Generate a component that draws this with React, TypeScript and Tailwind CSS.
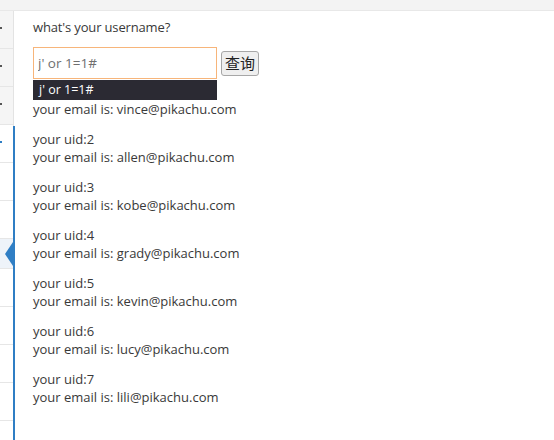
const users = [
    { uid: 2, email: 'allen@pikachu.com' },
    { uid: 3, email: 'kobe@pikachu.com' },
    { uid: 4, email: 'grady@pikachu.com' },
    { uid: 5, email: 'kevin@pikachu.com' },
    { uid: 6, email: 'lucy@pikachu.com' },
    { uid: 7, email: 'lili@pikachu.com' },
];

function SideRow({ gray, tick, blue }: { gray?: boolean; tick?: boolean; blue?: boolean }) {
    return (
        <div
            className={`relative h-[38px] border-b border-[#e6e6e6] ${gray ? 'bg-[#f5f5f5]' : 'bg-white'}`}
        >
            {tick && (
                <div
                    className={`absolute left-0 top-[16px] h-[2px] w-[2px] ${blue ? 'bg-[#2f7ec4]' : 'bg-[#555]'}`}
                />
            )}
        </div>
    );
}

export default function App() {
    return (
        <div className="flex h-[440px] w-[554px] flex-col overflow-hidden bg-white font-['Open_Sans',sans-serif] text-[13px] text-[#393939]">
            <div className="h-[11px] shrink-0 border-b border-[#e8e8e8] bg-[#f3f3f3]" />
            <div className="flex flex-1 flex-row">
                <div className="flex w-[13px] shrink-0 flex-col">
                    <SideRow gray tick />
                    <SideRow gray tick />
                    <SideRow gray tick />
                    <SideRow tick blue />
                    <SideRow />
                    <SideRow />
                    <div className="relative h-[30px] border-b border-[#e6e6e6] bg-[#eef3f9]">
                        <div className="absolute right-0 top-[3px] h-0 w-0 border-y-[12px] border-r-[8px] border-y-transparent border-r-[#2f7ec4]" />
                    </div>
                    <SideRow />
                    <SideRow />
                    <SideRow />
                    <SideRow />
                </div>
                <div className="flex w-[2px] shrink-0 flex-col">
                    <div className="h-[115px] shrink-0 border-l border-[#e3e3e3]" />
                    <div className="flex-1 bg-[#2f7ec4]" />
                </div>
                <div className="flex flex-1 flex-col pl-[18px] pt-[7px] leading-[18px]">
                    <p className="tracking-[-0.15px]">what's your username?</p>
                    <div className="mt-[11px] flex flex-row items-center gap-[4px]">
                        <div className="relative">
                            <input
                                className="h-[32px] w-[184px] border border-[#f7b57a] px-[4px] text-[13.5px] text-[#6f6f6f] outline-none"
                                type="text"
                                defaultValue="j' or 1=1#"
                            />
                            <div className="absolute left-0 top-[33px] z-10 h-[20px] w-[184px] bg-[#2b2a33] pl-[6px] text-[12.5px] leading-[20px] text-white">
                                j' or 1=1#
                            </div>
                        </div>
                        <button
                            className="h-[25px] rounded-[3px] border border-[#a7a7a7] bg-[#efefef] px-[3px] font-['Noto_Sans_CJK_SC',sans-serif] text-[15px] leading-[20px] text-[#222]"
                            type="button"
                        >
                            查询
                        </button>
                    </div>
                    <div className="mt-[3px] flex flex-col gap-[12px]">
                        <p>
                            <span className="block h-[18px]" />
                            your email is: vince@pikachu.com
                        </p>
                        {users.map((user) => (
                            <p key={user.uid}>
                                your uid:{user.uid}
                                <br />
                                your email is: {user.email}
                            </p>
                        ))}
                    </div>
                </div>
            </div>
        </div>
    );
}
